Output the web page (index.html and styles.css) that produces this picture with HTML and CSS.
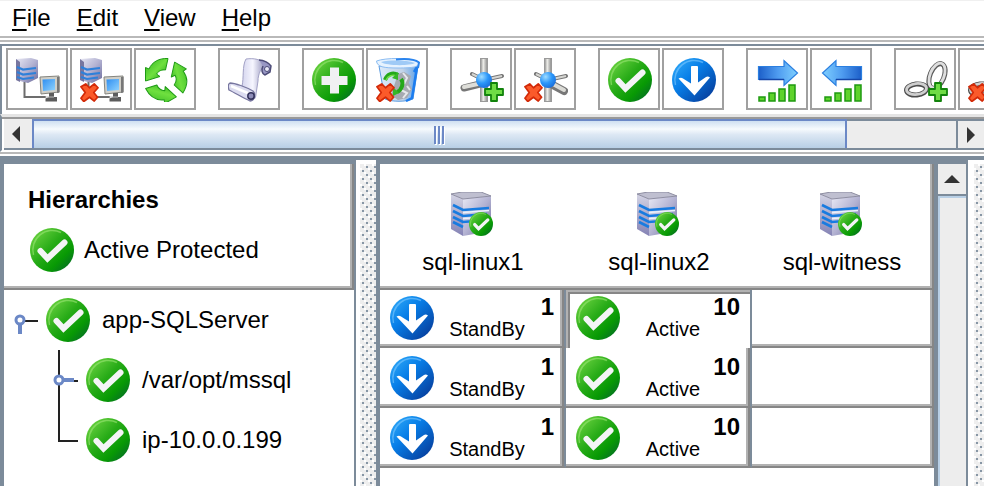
FILE: index.html
```
<!DOCTYPE html>
<html lang="en">
<head>
<meta charset="UTF-8">
<title>Hierarchies</title>
<link rel="stylesheet" href="styles.css">
</head>
<body>

<!-- shared icon shapes -->
<svg class="sprite" width="0" height="0" aria-hidden="true">
  <defs>
    <linearGradient id="gGreen" x1="0" y1="0" x2="1" y2="1">
      <stop offset="0" stop-color="#7bdc4a"/><stop offset=".45" stop-color="#27ab17"/><stop offset=".7" stop-color="#089a04"/><stop offset="1" stop-color="#045c33"/>
    </linearGradient>
    <linearGradient id="gLeaf" x1="0" y1="0" x2="1" y2="1">
      <stop offset="0" stop-color="#2fb41f"/><stop offset=".5" stop-color="#6fe03f"/><stop offset="1" stop-color="#1c9e14"/>
    </linearGradient>
    <linearGradient id="gBlue" x1="0" y1="0" x2="1" y2="1">
      <stop offset="0" stop-color="#36b0fb"/><stop offset=".4" stop-color="#087fe8"/><stop offset="1" stop-color="#06318e"/>
    </linearGradient>
    <linearGradient id="gArrow" x1="0" y1="0" x2="1" y2="0">
      <stop offset="0" stop-color="#1c5fc9"/><stop offset=".5" stop-color="#4f9cf0"/><stop offset="1" stop-color="#7fd0ff"/>
    </linearGradient>
    <linearGradient id="gArrowBack" x1="1" y1="0" x2="0" y2="0">
      <stop offset="0" stop-color="#1c5fc9"/><stop offset=".5" stop-color="#4f9cf0"/><stop offset="1" stop-color="#7fd0ff"/>
    </linearGradient>
    <linearGradient id="gSide" x1="0" y1="0" x2="0" y2="1">
      <stop offset="0" stop-color="#d4d4e4"/><stop offset="1" stop-color="#8482b4"/>
    </linearGradient>
    <linearGradient id="gFront" x1="0" y1="0" x2="1" y2="1">
      <stop offset="0" stop-color="#e8e8f4"/><stop offset=".5" stop-color="#b3b2d2"/><stop offset="1" stop-color="#6c6b9c"/>
    </linearGradient>
    <linearGradient id="gPaper" x1="0" y1="0" x2="1" y2="0">
      <stop offset="0" stop-color="#d5d5ee"/><stop offset=".45" stop-color="#f6f6ff"/><stop offset="1" stop-color="#8a89b4"/>
    </linearGradient>
    <linearGradient id="gMetal" x1="0" y1="0" x2="1" y2="0">
      <stop offset="0" stop-color="#8c8c8c"/><stop offset=".4" stop-color="#eeeeea"/><stop offset="1" stop-color="#888"/>
    </linearGradient>
    <linearGradient id="gBin" x1="0" y1="0" x2="1" y2="0">
      <stop offset="0" stop-color="#dbeafa"/><stop offset=".6" stop-color="#c3d4e8"/><stop offset="1" stop-color="#5b9fe6"/>
    </linearGradient>
    <radialGradient id="gBall" cx=".35" cy=".3" r=".8">
      <stop offset="0" stop-color="#9fdcff"/><stop offset=".5" stop-color="#2b97fa"/><stop offset="1" stop-color="#1767d6"/>
    </radialGradient>
    <linearGradient id="gScreen" x1="0" y1="0" x2="1" y2="1">
      <stop offset="0" stop-color="#2f8ef0"/><stop offset="1" stop-color="#8fd3ff"/>
    </linearGradient>
  </defs>

  <symbol id="check" viewBox="0 0 44 44">
    <circle cx="22" cy="22" r="22" fill="url(#gGreen)"/>
    <path d="M3.500 27A19.500 19.500 0 0 1 31 4.500" fill="none" stroke="#9be676" stroke-width="1.500" opacity=".6"/>
    <path d="M10.500 23L17.500 30.500L34.500 14.500" fill="none" stroke="#f4f4f6" stroke-width="6" stroke-linecap="round"/>
  </symbol>
  <symbol id="down" viewBox="0 0 44 44">
    <circle cx="22" cy="22" r="22" fill="url(#gBlue)"/>
    <path d="M3.500 27A19.500 19.500 0 0 1 31 4.500" fill="none" stroke="#7fcaff" stroke-width="1.500" opacity=".6"/>
    <path d="M19 9Q19 8 20 8h5q1 0 1 1v15.500L34 19q2-1 4 .500L22.500 37.500L6.500 20.500q2.500-1.500 4.500 0l8 5z" fill="#fff"/>
  </symbol>
  <symbol id="plus" viewBox="0 0 44 44">
    <circle cx="22" cy="22" r="22" fill="url(#gGreen)"/>
    <path d="M3.500 27A19.500 19.500 0 0 1 31 4.500" fill="none" stroke="#9be676" stroke-width="1.500" opacity=".6"/>
    <path d="M18 9.500h9v8.500h8.500v9H27v8.500h-9V27H9.500v-9H18z" fill="#f0f0f2"/>
  </symbol>

  <symbol id="cross" viewBox="0 0 20 20">
    <path d="M1 4L6 1L10 5L15 1L19 5L14.500 10L18.500 15L15 19L10 15L4 19.500L1 16L5.500 10z" fill="#fb5a2a" stroke="#d32a08" stroke-width="1.800" stroke-linejoin="round"/>
  </symbol>
  <symbol id="add" viewBox="0 0 20 20">
    <path d="M7 1h6v6h6v6h-6v6H7v-6H1V7h6z" fill="#6fdc45" stroke="#12830c" stroke-width="1.800" stroke-linejoin="round"/>
  </symbol>

  <symbol id="network" viewBox="0 0 44 44">
    <path d="M8.500 24v15H30" fill="none" stroke="#6d6d6d" stroke-width="2"/>
    <path d="M0 1L15 0L22 2V20L12 25L0 22z" fill="url(#gFront)"/>
    <path d="M0 1L4 4V24L0 22z" fill="#77769f"/>
    <path d="M1 9L7 11.500L20 10M1 14L7 16.500L20 15M1 19L7 21L18 19.500" fill="none" stroke="#2e80da" stroke-width="2.200"/>
    <path d="M24 19L43 18V34L25 36z" fill="#d0cfc8" stroke="#85857f"/>
    <path d="M26.500 21.500L39 21V32L27 33z" fill="url(#gScreen)"/>
    <path d="M41 19h2.500v15.500L41 35z" fill="#777"/>
    <path d="M33 35h5v4h3v4.500H29.500V40.500L33 39z" fill="#5c5c5c"/>
    <path d="M29 39h9" stroke="#bbb"/>
  </symbol>

  <symbol id="cycle" viewBox="0 0 44 44">
    <defs>
      <g id="cycleArrow">
        <path d="M24 .500C15 0 8 4 5 11L1.500 9.500V23L16 18.500L12.500 16C15 12.500 18 11.500 21.500 12z" fill="url(#gLeaf)" stroke="#1d9a14" stroke-linejoin="round"/>
      </g>
    </defs>
    <use href="#cycleArrow"/>
    <use href="#cycleArrow" transform="rotate(120 21.500 22)"/>
    <use href="#cycleArrow" transform="rotate(240 21.500 22)"/>
  </symbol>

  <symbol id="scroll" viewBox="0 0 44 44">
    <path d="M18 1C26 0 33 1 38 7C33 10 30 16 30 23L28 36C28 41 25 43 21 42L14 28C16 20 14 8 18 1z" fill="url(#gPaper)" stroke="#a3a2c6"/>
    <path d="M31 2C36 2 41 5 43 8L42 14L37 17C34 16 33 12 35 8" fill="#9897c4" stroke="#4d4c78" stroke-width="1.500"/>
    <circle cx="39" cy="11" r="2.500" fill="#e9e9f8" stroke="#4d4c78"/>
    <path d="M2 25C7 25 18 29 25 33C28 36 27 42 22 43C14 39 7 35 1 32C0 29 0 26 2 25z" fill="#dcdcf0" stroke="#77769f" stroke-width="1.300"/>
    <path d="M3 28L22 36" stroke="#fff" stroke-width="2.500"/>
    <circle cx="23" cy="38" r="3.200" fill="#8e8db8" stroke="#34335c" stroke-width="1.500"/>
  </symbol>

  <symbol id="bin" viewBox="0 0 44 44">
    <path d="M3 8L9 41C16 44 30 44 37 41L42 8z" fill="url(#gBin)" stroke="#5b9be0"/>
    <path d="M22 16l6-2 7 4-2 7 3 6-5 9-9 2-7-5z" fill="#a6aab2"/>
    <path d="M27 15l4 5-3 6M25 32l6 3-4 5M31 28l3 4" fill="none" stroke="#e6e8ec" stroke-width="2"/>
    <path d="M38 14L41 9L36 40L30 43" fill="none" stroke="#1c7df0" stroke-width="2.500"/>
    <path d="M0.500 3C10 -0.500 34 -0.500 43 4C43 9 38 10 22 10C8 10 1 9 0.500 3z" fill="#e6f2fe" stroke="#8bbcf2"/>
    <path d="M5 4C14 2 30 2 39 5C34 8 10 8 5 4z" fill="#9fcaf6"/>
    <path d="M20 1.500C30 .5 39 1.500 43 4.500L42 10" fill="none" stroke="#2a84ee" stroke-width="2"/>
    <path d="M9 22C11 16 17 14 22 17M25 21C28 25 26 32 21 34" fill="none" stroke="#25a81a" stroke-width="4"/>
    <path d="M10 22C12 18 17 16 20 18" fill="none" stroke="#75e04c" stroke-width="1.500"/>
    <path d="M22 14v8l-6-2zM17 29v9l6-3z" fill="#35b827"/>
    <use href="#cross" x="0" y="25" width="19" height="19"/>
  </symbol>

  <symbol id="hub" viewBox="0 0 44 44">
    <path d="M12 16L24 22L42 18" fill="none" stroke="#777" stroke-width="4" stroke-linecap="round"/>
    <path d="M12 16L24 22L42 18" fill="none" stroke="#d6d6d2" stroke-width="2"/>
    <rect x="20.500" y=".5" width="7" height="43" fill="url(#gMetal)" stroke="#9a9a9a"/>
  </symbol>
  <symbol id="hubAdd" viewBox="0 0 44 44">
    <use href="#hub" width="44" height="44"/>
    <path d="M4 30L20 26" stroke="#777" stroke-width="7" stroke-linecap="round"/>
    <path d="M4 29L20 25.500" stroke="#deded9" stroke-width="4" stroke-linecap="round"/>
    <circle cx="24" cy="22" r="8" fill="url(#gBall)"/>
    <use href="#add" x="24" y="24" width="20" height="20"/>
  </symbol>
  <symbol id="hubRemove" viewBox="0 0 44 44">
    <use href="#hub" width="44" height="44"/>
    <path d="M27 26L40 33" stroke="#777" stroke-width="8" stroke-linecap="round"/>
    <path d="M27 25L40 32" stroke="#dadad5" stroke-width="4" stroke-linecap="round"/>
    <circle cx="24" cy="22" r="8" fill="url(#gBall)"/>
    <use href="#cross" x="0" y="25" width="19" height="19"/>
  </symbol>

  <symbol id="bars" viewBox="0 0 44 44">
    <g fill="#5fd32c" stroke="#1f9a10" stroke-width="1.500">
      <path d="M3 39h6v4H3zM13 35h6v8h-6zM23 31h6v12h-6zM33 27h6v16h-6z"/>
    </g>
  </symbol>
  <symbol id="arrow" viewBox="0 0 44 44">
    <path d="M2.500 8.500H28V2.500L41.500 15L28 27.500V21.500H2.500z" fill="url(#gArrow)" stroke="#2b7fe0" stroke-width="1.200"/>
    <path d="M3 21.500H28" stroke="#1546a8" stroke-width="1.500"/>
  </symbol>
  <symbol id="arrowBack" viewBox="0 0 44 44">
    <path d="M41.500 8.500H16V2.500L2.500 15L16 27.500V21.500H41.500z" fill="url(#gArrowBack)" stroke="#2b7fe0" stroke-width="1.200"/>
    <path d="M41 21.500H16" stroke="#1546a8" stroke-width="1.500"/>
  </symbol>

  <symbol id="chain" viewBox="0 0 44 44">
    <ellipse cx="33" cy="18" rx="7" ry="13" transform="rotate(22 33 18)" fill="none" stroke="#5a5a5a" stroke-width="5"/>
    <ellipse cx="33" cy="17.500" rx="7" ry="13" transform="rotate(22 33 17.500)" fill="none" stroke="#dedede" stroke-width="2.800"/>
    <ellipse cx="12.500" cy="31.500" rx="10" ry="5.500" transform="rotate(-6 12.500 31.500)" fill="none" stroke="#4c4c4c" stroke-width="5"/>
    <ellipse cx="12.500" cy="31" rx="10" ry="5.500" transform="rotate(-6 12.500 31)" fill="none" stroke="#cfcfcf" stroke-width="2.800"/>
  </symbol>

  <symbol id="server" viewBox="0 0 44 44">
    <path d="M0 2L12 7V44L0 37z" fill="url(#gSide)"/>
    <path d="M12 7L40 4V39L12 44z" fill="url(#gFront)"/>
    <path d="M0 2L11 0H30L40 4L12 7z" fill="#bfbfd0" stroke="#8e8ea2"/>
    <path d="M2 13L12 18L38 16M2 19L12 24L36 22M2 25L12 30L24 29M2 30L12 35" fill="none" stroke="#187be0" stroke-width="2.600"/>
    <path d="M12 20.500L38 18.500M12 26.500L28 25.500" stroke="#e9f1fc" stroke-width="1.500"/>
    <use href="#check" x="18" y="20" width="24" height="24"/>
  </symbol>
</svg>

<nav class="menubar">
  <button type="button"><u>F</u>ile</button>
  <button type="button"><u>E</u>dit</button>
  <button type="button"><u>V</u>iew</button>
  <button type="button"><u>H</u>elp</button>
</nav>

<header class="toolbar-pane">
  <div class="toolbar">
    <div class="group">
      <button type="button" class="tool" aria-label="Connect"><svg class="icon"><use href="#network"/></svg></button>
      <button type="button" class="tool" aria-label="Disconnect"><svg class="icon" viewBox="0 0 44 44"><use href="#network"/><use href="#cross" x="0" y="25" width="19" height="19"/></svg></button>
      <button type="button" class="tool" aria-label="Refresh"><svg class="icon"><use href="#cycle"/></svg></button>
    </div>
    <div class="group">
      <button type="button" class="tool" aria-label="View logs"><svg class="icon"><use href="#scroll"/></svg></button>
    </div>
    <div class="group">
      <button type="button" class="tool" aria-label="Create resource hierarchy"><svg class="icon"><use href="#plus"/></svg></button>
      <button type="button" class="tool" aria-label="Delete resource hierarchy"><svg class="icon"><use href="#bin"/></svg></button>
    </div>
    <div class="group">
      <button type="button" class="tool" aria-label="Create comm path"><svg class="icon"><use href="#hubAdd"/></svg></button>
      <button type="button" class="tool" aria-label="Delete comm path"><svg class="icon"><use href="#hubRemove"/></svg></button>
    </div>
    <div class="group">
      <button type="button" class="tool" aria-label="In service"><svg class="icon"><use href="#check"/></svg></button>
      <button type="button" class="tool" aria-label="Out of service"><svg class="icon"><use href="#down"/></svg></button>
    </div>
    <div class="group">
      <button type="button" class="tool" aria-label="Extend hierarchy"><svg class="icon" viewBox="0 0 44 44"><use href="#arrow"/><use href="#bars"/></svg></button>
      <button type="button" class="tool" aria-label="Unextend hierarchy"><svg class="icon" viewBox="0 0 44 44"><use href="#arrowBack"/><use href="#bars" x="2" width="44" height="44"/></svg></button>
    </div>
    <div class="group">
      <button type="button" class="tool" aria-label="Create dependency"><svg class="icon" viewBox="0 0 44 44"><use href="#chain"/><use href="#add" x="24" y="24" width="20" height="20"/></svg></button>
      <button type="button" class="tool" aria-label="Delete dependency"><svg class="icon" viewBox="0 0 44 44"><use href="#chain"/><use href="#cross" x="0" y="25" width="19" height="19"/></svg></button>
    </div>
  </div>
  <div class="hscroll">
    <button type="button" aria-label="Scroll left"><svg width="8" height="16"><path d="M8 0v16L0 8z" fill="#333"/></svg></button>
    <div class="htrack">
      <div class="thumb" style="width:88.2%"><i></i><i></i><i></i></div>
    </div>
    <button type="button" class="right" aria-label="Scroll right"><svg width="8" height="16"><path d="M0 0v16L8 8z" fill="#333"/></svg></button>
  </div>
</header>

<main class="split">
  <section class="hierarchies">
    <div class="legend">
      <h1>Hierarchies</h1>
      <p><svg class="icon"><use href="#check"/></svg>Active Protected</p>
    </div>
    <ul class="tree">
      <li>
        <svg class="guide" width="42" height="60" fill="none">
          <path d="M20 31h14" stroke="#222" stroke-width="2"/>
          <path d="M16 34v10" stroke="#6b88c6" stroke-width="4"/>
          <circle cx="16" cy="30" r="4" fill="#fff" stroke="#6b88c6" stroke-width="3"/>
        </svg>
        <svg class="icon"><use href="#check"/></svg>
        <span>app-SQLServer</span>
      </li>
      <li>
        <svg class="guide" width="82" height="60" fill="none">
          <path d="M55 0v60M68 31h6" stroke="#222" stroke-width="2"/>
          <path d="M59 30h11" stroke="#6b88c6" stroke-width="4"/>
          <circle cx="55" cy="30" r="4" fill="#fff" stroke="#6b88c6" stroke-width="3"/>
        </svg>
        <svg class="icon"><use href="#check"/></svg>
        <span>/var/opt/mssql</span>
      </li>
      <li>
        <svg class="guide" width="82" height="60" fill="none">
          <path d="M55 0v31h19" stroke="#222" stroke-width="2"/>
        </svg>
        <svg class="icon"><use href="#check"/></svg>
        <span>ip-10.0.0.199</span>
      </li>
    </ul>
  </section>

  <div class="divider"></div>

  <section class="servers">
    <table>
      <colgroup><col class="col"><col class="col"><col></colgroup>
      <thead>
        <tr>
          <th scope="col"><svg class="icon"><use href="#server"/></svg>sql-linux1</th>
          <th scope="col"><svg class="icon"><use href="#server"/></svg>sql-linux2</th>
          <th scope="col"><svg class="icon"><use href="#server"/></svg>sql-witness</th>
        </tr>
      </thead>
      <tbody>
        <tr>
          <td><div class="state"><svg class="icon"><use href="#down"/></svg><b>1</b><span>StandBy</span></div></td>
          <td class="selected"><div class="state"><svg class="icon"><use href="#check"/></svg><b>10</b><span>Active</span></div></td>
          <td></td>
        </tr>
        <tr>
          <td><div class="state"><svg class="icon"><use href="#down"/></svg><b>1</b><span>StandBy</span></div></td>
          <td><div class="state"><svg class="icon"><use href="#check"/></svg><b>10</b><span>Active</span></div></td>
          <td></td>
        </tr>
        <tr>
          <td><div class="state"><svg class="icon"><use href="#down"/></svg><b>1</b><span>StandBy</span></div></td>
          <td><div class="state"><svg class="icon"><use href="#check"/></svg><b>10</b><span>Active</span></div></td>
          <td></td>
        </tr>
      </tbody>
    </table>
  </section>

  <div class="vscroll">
    <button type="button" aria-label="Scroll up"><svg width="16" height="8"><path d="M0 8h16L8 0z" fill="#333"/></svg></button>
    <div class="vtrack"></div>
  </div>

  <div class="divider end"></div>
</main>

</body>
</html>
```
FILE: styles.css
```
:root{
  --slate:#7c8b9a;
  --line:#b9b9b9;
  --bevel-dark:#868686;
  --bevel-light:#b2b2b2;
  --face:#ededed;
  --blue:#6b88c6;
}
*{box-sizing:border-box;margin:0;padding:0;}
body{
  display:flex;
  flex-direction:column;
  height:100vh;
  overflow:hidden;
  background:#fff;
  color:#000;
  font:24px/28px "Liberation Sans",Arial,sans-serif;
}
button{border:none;background:none;font:inherit;color:inherit;}
.sprite{position:absolute;}
.icon{display:block;flex:none;width:44px;height:44px;}

/* menu */
.menubar{
  display:flex;
  gap:26px;
  padding:3px 12px 4px;
  border-top:1px solid #f0f0f0;
  border-bottom:2px solid var(--line);
}
.menubar u{text-decoration-thickness:2px;text-underline-offset:3px;}

/* toolbar */
.toolbar-pane{
  margin-top:2px;
  padding-top:2px;
  border-top:2px solid var(--line);
  border-bottom:2px solid var(--line);
}
.toolbar{
  display:flex;
  gap:22px;
  padding:2px 4px 4px;
  overflow:hidden;
  border-top:2px solid var(--slate);
  border-left:2px solid var(--slate);
}
.group{display:flex;gap:2px;}
.tool{
  flex:none;
  width:62px;
  height:62px;
  padding:8px 6px 6px 8px;
  border:2px solid #a0a0a0;
  background:#fff;
}
.hscroll{
  display:flex;
  height:38px;
  padding:2px 0 0 2px;
  border-left:2px solid var(--slate);
  border-top:3px solid #e4e4e4;
  border-bottom:2px solid #fff;
  box-shadow:inset 0 2px #999;
}
.hscroll button{
  display:flex;
  align-items:center;
  justify-content:center;
  width:28px;
  padding-right:4px;
  background:var(--face);
  border-bottom:2px solid var(--slate);
}
.hscroll .right{padding:0;border-left:2px solid var(--slate);border-top:2px solid var(--slate);}
.htrack{
  flex:1;
  background:var(--face);
  border-top:2px solid var(--slate);
  border-bottom:2px solid var(--slate);
}
.thumb{
  display:flex;
  align-items:center;
  justify-content:center;
  gap:2px;
  height:29px;
  margin-top:-2px;
  border:solid var(--blue);
  border-width:2px 2px 0;
  background:linear-gradient(#cfe0f1,#f6fafd 30%,#dde8f4 50%,#b8cfe5);
}
.thumb i{width:2px;height:18px;background:var(--blue);box-shadow:1px 1px #fff;}

/* split panes */
.split{
  flex:1;
  display:flex;
  min-height:0;
  margin-top:2px;
  padding-left:4px;
  border-top:8px solid var(--slate);
  background:var(--slate);
}
.hierarchies{
  flex:none;
  width:350px;
  background:#fff;
}
.legend{
  height:126px;
  padding:22px 24px;
  border-right:2px solid var(--bevel-dark);
  border-bottom:2px solid var(--bevel-dark);
  box-shadow:inset -2px -2px var(--bevel-light);
}
.legend h1{font-size:24px;line-height:28px;}
.legend p{display:flex;align-items:center;gap:10px;padding-top:14px;}
.legend .icon{margin-left:2px;}
.tree{list-style:none;}
.tree li{display:flex;align-items:center;height:60px;}
.tree span{margin-left:12px;}
.guide{flex:none;}

.divider{
  flex:none;
  width:20px;
  margin:-4px 4px 0 2px;
  border-left:4px solid #fff;
  border-top:4px solid #fff;
  background:
    radial-gradient(circle at 3px 3px,#8796a5 1px,transparent 1px) 4px 0/8px 8px,
    radial-gradient(circle at 3px 3px,#8796a5 1px,transparent 1px) 0 4px/8px 8px,
    radial-gradient(circle at 5px 5px,#fff 1px,transparent 1px) 4px 0/8px 8px,
    radial-gradient(circle at 5px 5px,#fff 1px,transparent 1px) 0 4px/8px 8px,
    #eee;
}
.divider.end{width:16px;margin:-4px 0 0;border-left-width:6px;}

/* server table */
.servers{flex:1;min-width:0;background:#fff;}
table{width:100%;table-layout:fixed;border-collapse:separate;border-spacing:0;}
.col{width:186px;}
th{
  height:126px;
  padding:28px 0 8px;
  vertical-align:top;
  border-bottom:2px solid var(--bevel-dark);
  box-shadow:inset 0 -2px var(--bevel-light);
  font-weight:normal;
}
th:last-child{border-right:2px solid var(--bevel-dark);box-shadow:inset -2px -2px var(--bevel-light);}
th .icon{margin:0 auto 12px;}
td{
  height:60px;
  padding:0 10px 6px;
  vertical-align:bottom;
  border-right:2px solid var(--slate);
  border-bottom:2px solid var(--bevel-dark);
  box-shadow:inset -2px 0 var(--bevel-dark),inset -4px -2px var(--bevel-light);
}
td:last-child{border-right-color:var(--bevel-dark);box-shadow:inset -2px -2px var(--bevel-light);}
tbody tr:first-child td{height:58px;}
tbody td.selected{
  padding-bottom:8px;
  border-bottom:none;
  box-shadow:inset 2px 2px var(--bevel-light),inset 4px 4px var(--bevel-dark);
}
.state{display:grid;grid-template-columns:44px 1fr;}
.state .icon{grid-row:1/3;}
.state b{justify-self:end;line-height:22px;}
.state span{justify-self:center;padding-right:14px;font-size:20px;line-height:22px;}

.vscroll{
  display:flex;
  flex-direction:column;
  flex:none;
  width:34px;
  padding-left:4px;
  border-right:2px solid var(--slate);
}
.vscroll button{
  display:flex;
  align-items:center;
  justify-content:center;
  height:32px;
  background:var(--face);
  border-bottom:2px solid var(--slate);
}
.vtrack{
  flex:1;
  background:var(--face);
  border-left:2px solid #b8cfe5;
  border-top:2px solid #b8cfe5;
}
```
